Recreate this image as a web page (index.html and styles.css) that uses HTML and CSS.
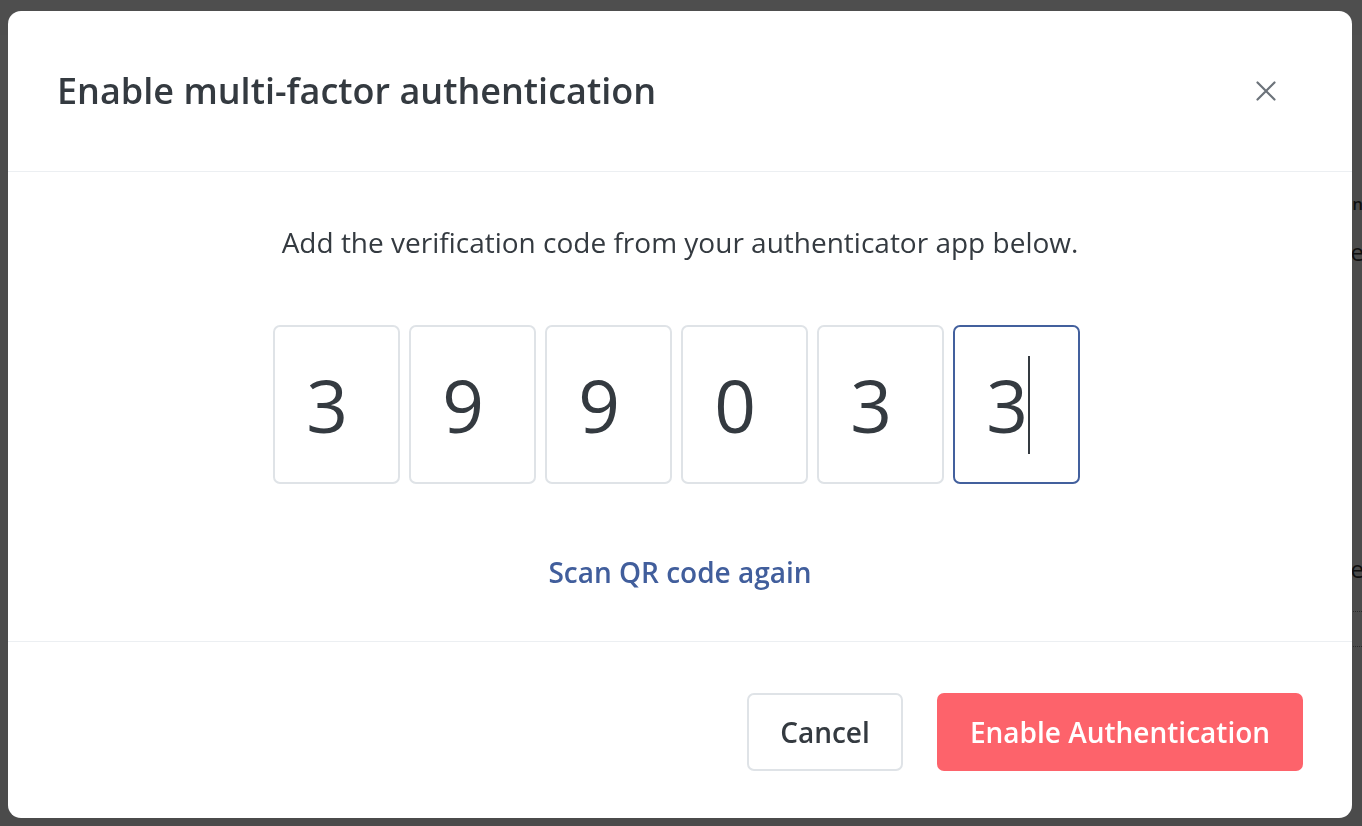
FILE: index.html
```html
<!DOCTYPE html>
<html lang="en">
<head>
<meta charset="utf-8">
<title>Enable multi-factor authentication</title>
<link rel="stylesheet" href="styles.css">
</head>
<body>
<div class="page">
  <div class="page-top"></div>
  <div class="page-row row-a">Turn on</div>
  <div class="page-row row-b">Manage</div>
  <div class="page-row row-c">Manage</div>
  <div class="page-rule rule-a"></div>
  <div class="page-rule rule-b"></div>
</div>
<div class="overlay">
  <div class="modal" role="dialog" aria-labelledby="mfa-title">
    <div class="modal-header">
      <h2 class="modal-title" id="mfa-title">Enable multi-factor authentication</h2>
      <button class="close-btn" aria-label="Close">
        <svg width="20" height="20" viewBox="0 0 20 20" aria-hidden="true">
          <path d="M1.5 1.5 L18.5 18.5 M18.5 1.5 L1.5 18.5" stroke="#6c737a" stroke-width="2.2" stroke-linecap="round" fill="none"/>
        </svg>
      </button>
    </div>
    <div class="modal-body">
      <p class="lead">Add the verification code from your authenticator app below.</p>
      <div class="code-row">
        <div class="code-box">3</div>
        <div class="code-box">9</div>
        <div class="code-box">9</div>
        <div class="code-box">0</div>
        <div class="code-box">3</div>
        <div class="code-box focused">3<span class="caret"></span></div>
      </div>
      <a class="rescan" href="#">Scan QR code again</a>
    </div>
    <div class="modal-footer">
      <button class="btn btn-cancel">Cancel</button>
      <button class="btn btn-primary">Enable Authentication</button>
    </div>
  </div>
</div>
</body>
</html>
```

FILE: styles.css
```css
* { box-sizing: border-box; }

html, body {
  margin: 0;
  height: 100%;
}

body {
  background: #f1f2f3;
  font-family: "Open Sans", "Noto Sans", "Liberation Sans", sans-serif;
  color: #343a40;
  overflow: hidden;
}

/* background page (under the dim overlay) */
.page {
  height: 826px;
  display: flex;
  flex-direction: column;
  align-items: flex-end;
  color: #333333;
}

.page-top {
  height: 100px;
  width: 100%;
  background: #ffffff;
  border-top: 35px solid #fafafa;
}

.page-row {
  white-space: nowrap;
}

.row-a {
  margin-top: 92px;
  font-size: 17px;
  font-weight: 600;
  margin-right: -1px;
}

.row-b {
  margin-top: 20px;
  font-size: 24px;
  margin-right: -2px;
}

.row-c {
  margin-top: 284px;
  font-size: 24px;
  margin-right: -2px;
}

.page-rule {
  width: 20px;
  border-top: 1px dotted #888;
}

.rule-a { margin-top: 26px; }
.rule-b { margin-top: 34px; }

/* overlay + modal */
.overlay {
  position: fixed;
  inset: 0;
  background: rgba(0, 0, 0, 0.69);
  display: flex;
  padding: 11px 10px 8px 8px;
}

.modal {
  flex: 1;
  background: #ffffff;
  border-radius: 13px;
  display: flex;
  flex-direction: column;
  overflow: hidden;
}

.modal-header {
  height: 161px;
  flex: none;
  border-bottom: 1px solid #eceff2;
  display: flex;
  align-items: center;
  justify-content: space-between;
  padding: 0 76px 0 49px;
}

.modal-title {
  margin: 0;
  font-size: 36px;
  font-weight: 600;
  color: #343a40;
  line-height: 44px;
}

.close-btn {
  border: 0;
  background: none;
  padding: 0;
  width: 20px;
  height: 20px;
  display: flex;
  cursor: pointer;
}

.modal-body {
  flex: 1;
  display: flex;
  flex-direction: column;
  align-items: center;
  padding-top: 51px;
}

.lead {
  margin: 0;
  font-size: 28px;
  line-height: 38px;
  color: #343a40;
}

.code-row {
  display: flex;
  gap: 9px;
  margin-top: 64px;
  margin-right: 7px;
}

.code-box {
  width: 127px;
  height: 159px;
  border: 2px solid #dfe3e7;
  border-radius: 7px;
  display: flex;
  align-items: center;
  justify-content: center;
  padding-right: 19px;
  font-size: 73px;
  line-height: 1;
  color: #343a40;
}

.code-box.focused {
  border-color: #43609d;
}

.caret {
  display: inline-block;
  width: 2px;
  height: 98px;
  background: #343a40;
  margin-left: 0;
  margin-right: -2px;
  align-self: center;
}

.rescan {
  margin-top: 69px;
  font-size: 28px;
  font-weight: 600;
  line-height: 38px;
  color: #415e9c;
  text-decoration: none;
}

.modal-footer {
  height: 177px;
  flex: none;
  border-top: 1px solid #eceff2;
  display: flex;
  align-items: center;
  justify-content: flex-end;
  gap: 34px;
  padding: 4px 49px 0 0;
}

.btn {
  height: 78px;
  border-radius: 7px;
  font-family: inherit;
  font-size: 28px;
  font-weight: 600;
  cursor: pointer;
}

.btn-cancel {
  width: 156px;
  background: #ffffff;
  border: 2px solid #dfe3e7;
  color: #343a40;
}

.btn-primary {
  width: 366px;
  background: #fd636b;
  border: 0;
  color: #ffffff;
}
```
